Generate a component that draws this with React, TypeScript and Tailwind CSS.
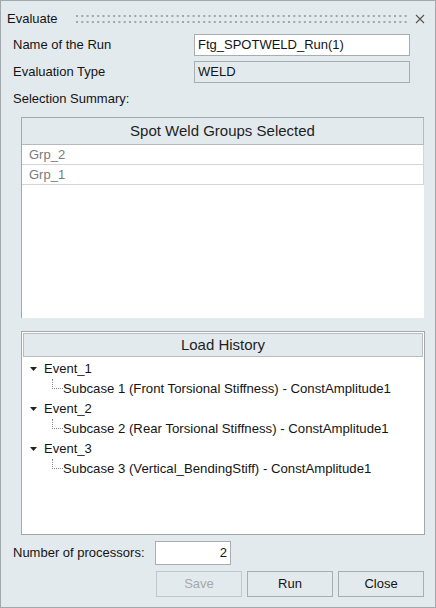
import React from "react"

const FONT = { fontFamily: '"Liberation Sans", Arial, sans-serif' }

function Grip() {
  const dots = []
  for (let i = 0; i < 63; i++) {
    dots.push(<rect key={"a" + i} x={i * 5.3} y={0} width={2} height={2} fill="#a3a6a9" />)
    dots.push(<rect key={"b" + i} x={i * 5.3} y={6} width={2} height={2} fill="#a3a6a9" />)
  }
  return (
    <svg width="334" height="8" className="block">
      {dots}
    </svg>
  )
}

function TreeEvent({ name, sub }: { name: string; sub: string }) {
  return (
    <>
      <div className="h-[20px] flex items-center">
        <svg width="7" height="4" className="ml-[8px] mr-[7px]">
          <polygon points="0,0 7,0 3.5,4" fill="#222" />
        </svg>
        <span>{name}</span>
      </div>
      <div className="h-[20px] flex items-center">
        <span className="ml-[30px] w-[11px] h-[10px] self-start border-l border-b border-dotted border-[#8a8a8a]" />
        <span className="text-[13.2px]">{sub}</span>
      </div>
    </>
  )
}

export default function App() {
  return (
    <div style={FONT} className="w-[436px] h-[608px] border border-[#a3a8ac] bg-[#e3eaee] flex flex-col text-[13px] text-[#141414]">
      {/* title */}
      <div className="mt-[6px] h-[24px] flex items-center pl-[6px] pr-[10px]">
        <span className="w-[69px]">Evaluate</span>
        <Grip />
        <svg width="10" height="10" className="ml-auto">
          <path d="M1 1 L9 9 M9 1 L1 9" stroke="#555" strokeWidth="1.1" />
        </svg>
      </div>

      <div className="mt-[3px] h-[22px] flex items-center pl-[12px]">
        <span className="w-[181px]">Name of the Run</span>
        <div className="w-[216px] h-[22px] bg-white border border-[#a9adb1] flex items-center px-[3px]">Ftg_SPOTWELD_Run(1)</div>
      </div>
      <div className="mt-[5px] h-[22px] flex items-center pl-[12px]">
        <span className="w-[181px]">Evaluation Type</span>
        <div className="w-[216px] h-[22px] border border-[#a9adb1] flex items-center px-[3px]">WELD</div>
      </div>
      <div className="mt-[5px] h-[22px] flex items-center pl-[12px]">Selection Summary:</div>

      {/* selected groups */}
      <div className="mt-[7px] ml-[20px] w-[403px] h-[201px] border-l border-t border-[#a4a8ac] bg-white flex flex-col">
        <div className="h-[27px] bg-[#e3eaee] border-b border-r border-[#b6babd] flex items-center justify-center text-[15px] text-[#1e1e1e]">
          Spot Weld Groups Selected
        </div>
        {["Grp_2", "Grp_1"].map((g) => (
          <div key={g} className="h-[20px] border-b border-r border-[#d2d4d6] flex items-center pl-[7px] text-[#7a7a7a]">
            {g}
          </div>
        ))}
      </div>

      {/* load history */}
      <div className="mt-[13px] ml-[20px] w-[404px] h-[204px] border border-[#a4a8ac] bg-white flex flex-col">
        <div className="m-[1px] h-[24px] bg-[#e3eaee] border border-[#b9bdc0] flex items-center justify-center text-[15px] text-[#1e1e1e]">
          Load History
        </div>
        <div className="pt-[1px]">
          <TreeEvent name="Event_1" sub="Subcase 1 (Front Torsional Stiffness) - ConstAmplitude1" />
          <TreeEvent name="Event_2" sub="Subcase 2 (Rear Torsional Stiffness) - ConstAmplitude1" />
          <TreeEvent name="Event_3" sub="Subcase 3 (Vertical_BendingStiff) - ConstAmplitude1" />
        </div>
      </div>

      <div className="mt-[6px] h-[24px] flex items-center pl-[12px]">
        <span className="w-[142px]">Number of processors:</span>
        <div className="w-[76px] h-[24px] bg-white border border-[#a9adb1] flex items-center justify-end pr-[3px]">2</div>
      </div>

      <div className="mt-[6px] flex justify-end gap-[5px] pr-[11px]">
        <button className="w-[86px] h-[26px] border border-[#c3c6c9] text-[#a6a8aa]">Save</button>
        <button className="w-[86px] h-[26px] border border-[#a9adb1]">Run</button>
        <button className="w-[86px] h-[26px] border border-[#a9adb1]">Close</button>
      </div>
    </div>
  )
}
